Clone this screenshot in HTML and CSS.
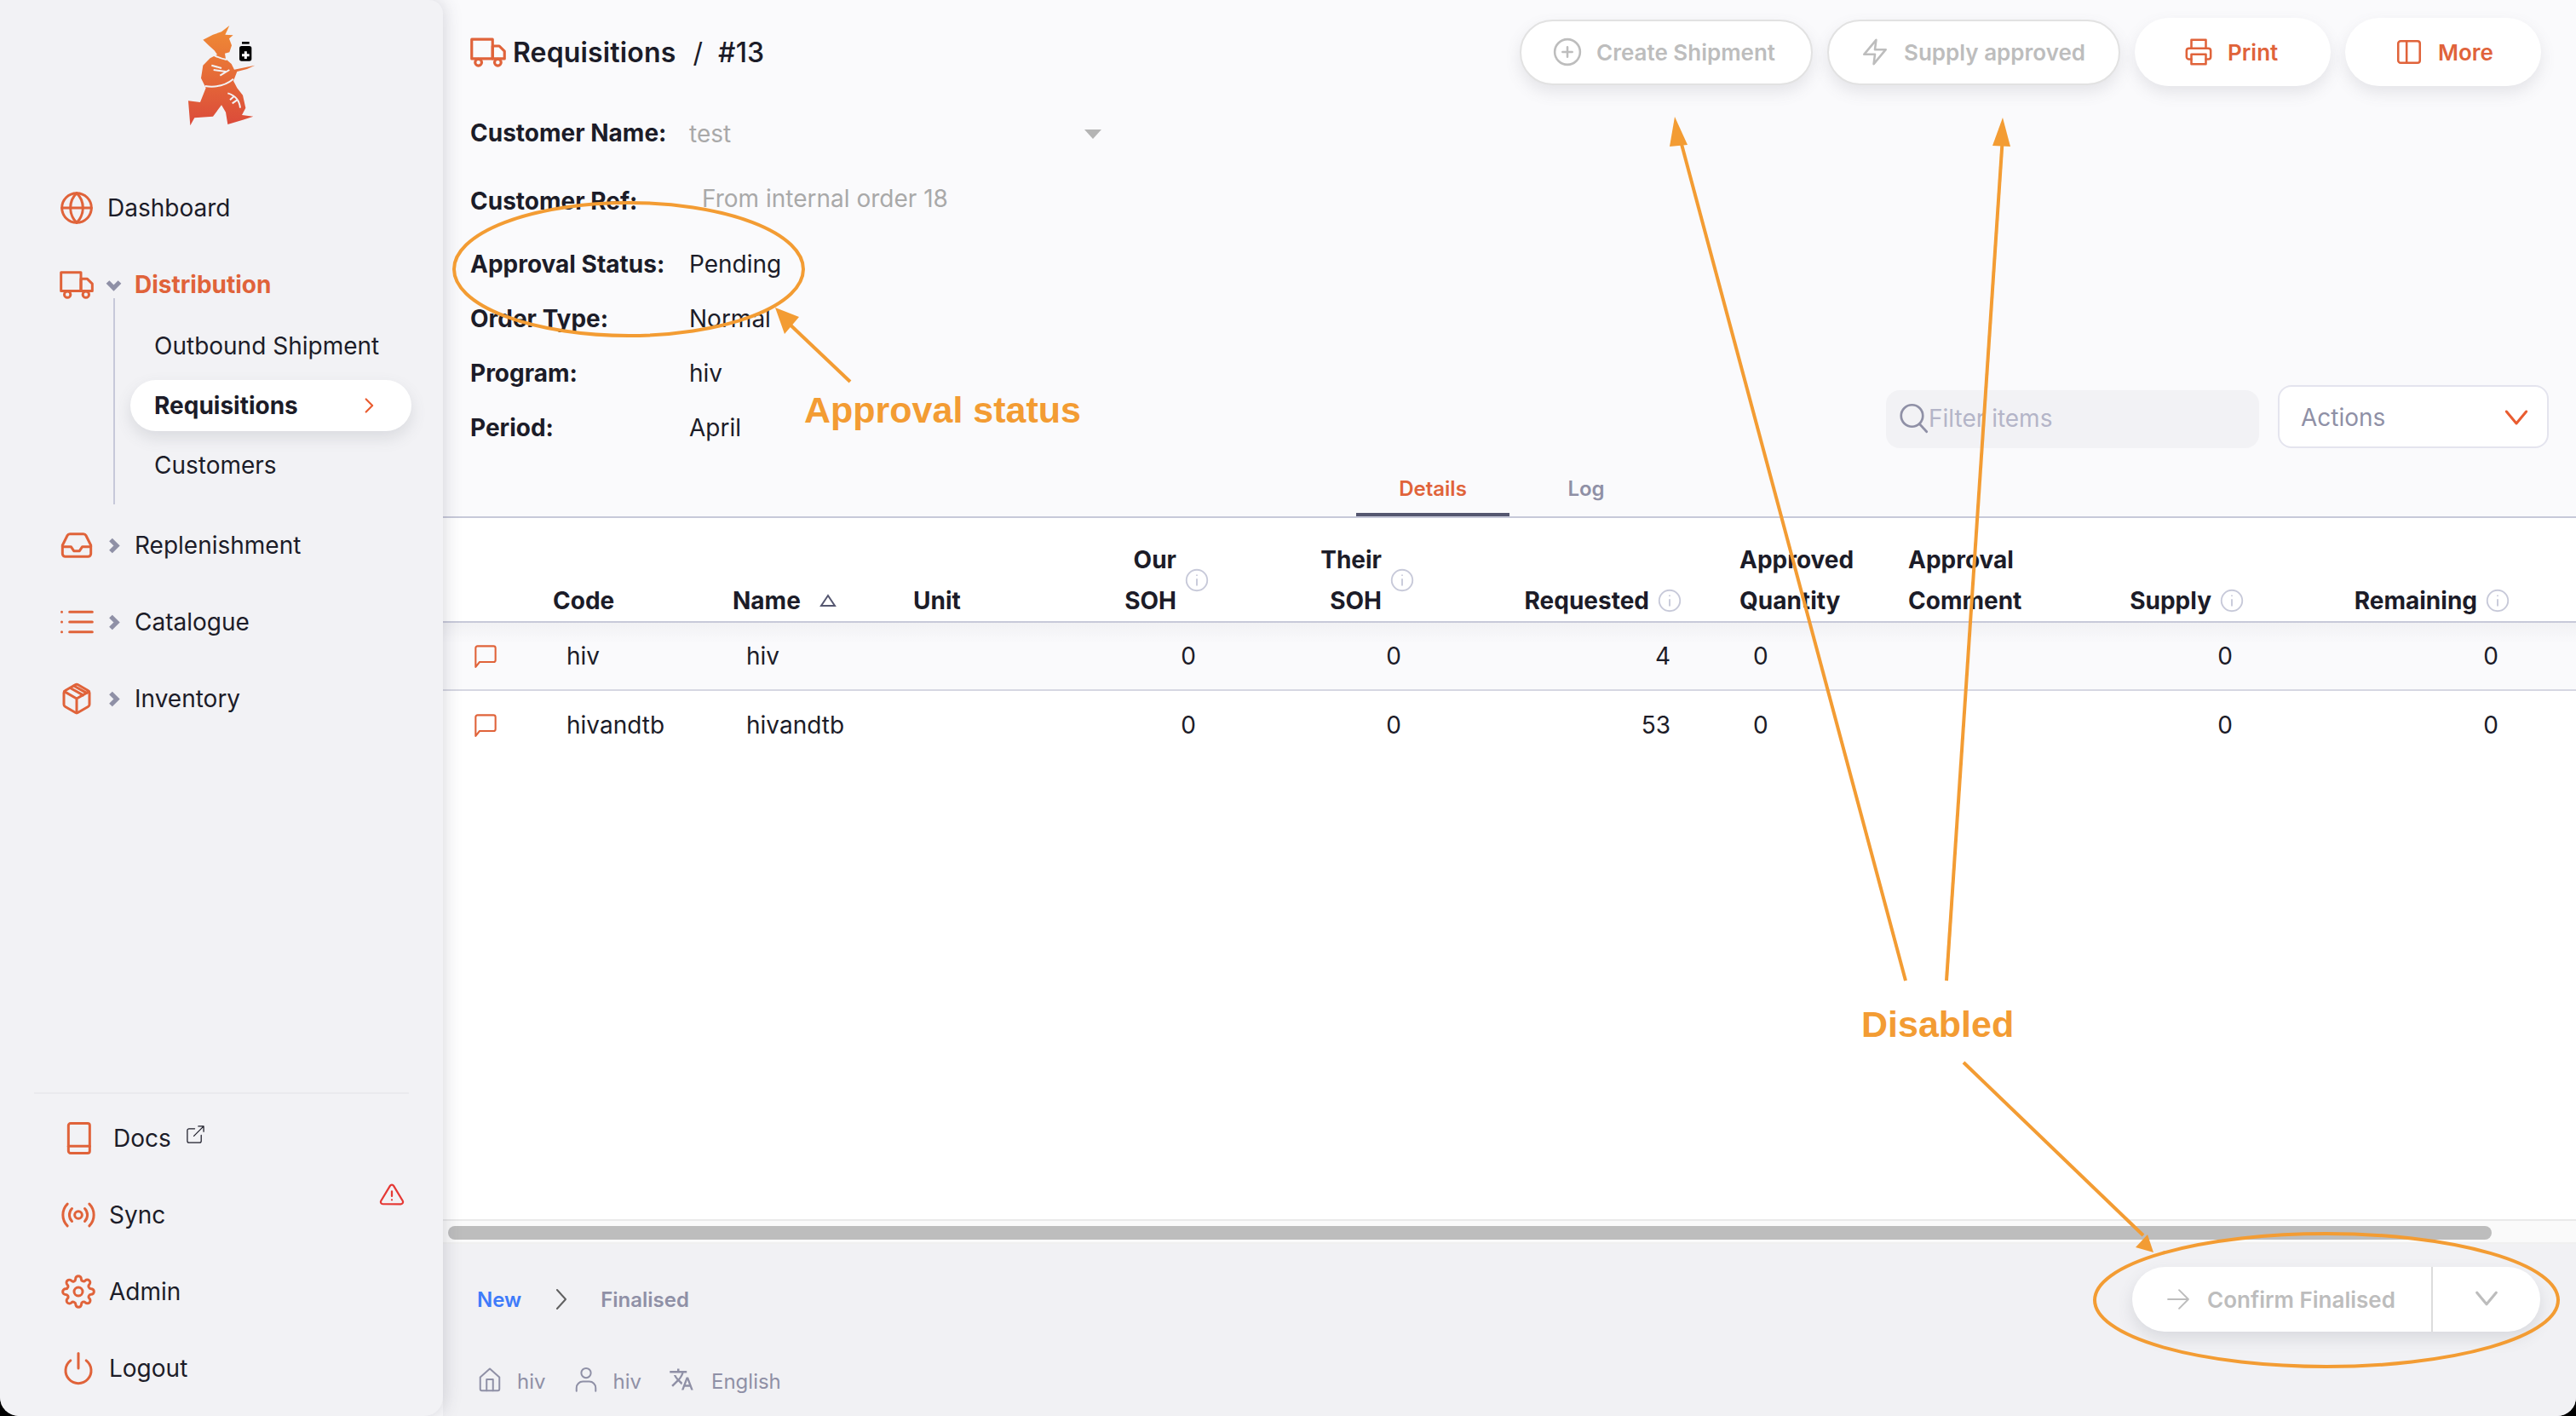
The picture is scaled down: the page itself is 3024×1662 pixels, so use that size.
FILE: index.html
```html
<!DOCTYPE html>
<html lang="en">
<head>
  <meta charset="UTF-8">
  <title>Requisitions #13</title>
  <link rel="stylesheet" href="styles.css">
</head>
<body>
  <div class="app">
    <aside class="sidebar">
      <div class="logo">
        <svg class="logo-img" viewBox="0 0 300 405">
          <defs>
            <linearGradient id="logoFill" x1="0" y1="0" x2="0" y2="1">
              <stop offset="0" stop-color="#f08c35"/>
              <stop offset="1" stop-color="#db4a3a"/>
            </linearGradient>
          </defs>
          <path fill="url(#logoFill)" d="M178 30 L163 62 L191 64 L177 76 L186 100 L178 124 L162 128 L165 148 L185 165 L195 185 L268 170 L240 183 L205 192 L192 225 L205 250 L225 275 L235 320 L222 345 L262 350 L225 362 L172 378 L165 335 L150 310 L120 350 L55 355 L40 382 L33 295 L75 300 L95 250 L78 215 L85 170 L110 145 L135 132 L125 118 L105 100 L85 80 L120 62 L150 52 Z"/>
          <g class="logo-cut">
            <path d="M92 243 Q150 252 192 218"/>
            <path d="M122 134 Q145 146 168 150"/>
            <path d="M115 170 L150 180 M122 186 L165 192 M145 206 L178 186"/>
            <path d="M172 268 Q212 280 216 320 M195 278 L180 292 M205 292 L188 304"/>
          </g>
          <rect x="222" y="87" width="26" height="8"/>
          <rect x="213" y="102" width="43" height="53" rx="8"/>
          <path class="logo-cross" d="M235 121 V147 M222 134 H248"/>
        </svg>
      </div>

      <nav class="nav">
        <a class="nav-item">
          <svg class="ic nav-icon" viewBox="0 0 24 24"><circle cx="12" cy="12" r="10.4"/><path d="M1.600 12h20.800"/><path d="M12 1.600c3 2.900 4.400 6.500 4.400 10.400S15 19.500 12 22.400C9 19.500 7.600 15.900 7.600 12S9 4.500 12 1.600z"/></svg>
          <span class="nav-label">Dashboard</span>
        </a>
        <a class="nav-item nav-item-open">
          <svg class="ic nav-icon" viewBox="0 0 24 24"><path d="M1 3.500h14v13H1z"/><path d="M15 8h4.500L23 11.500v5h-8z"/><circle cx="5.500" cy="19" r="2.200"/><circle cx="18.500" cy="19" r="2.200"/></svg>
          <svg class="ic nav-caret" viewBox="0 0 24 24"><path d="M4 8l8 8 8-8"/></svg>
          <span class="nav-label">Distribution</span>
        </a>
        <div class="subnav">
          <a class="subnav-item">Outbound Shipment</a>
          <a class="subnav-item subnav-active">Requisitions
            <svg class="ic subnav-arrow" viewBox="0 0 24 24"><path d="M8 3l9 9-9 9"/></svg>
          </a>
          <a class="subnav-item">Customers</a>
        </div>
        <a class="nav-item">
          <svg class="ic nav-icon" viewBox="0 0 24 24"><path d="M22 13h-6l-2 3h-4l-2-3H2"/><path d="M5.450 5.110L2 12v6a2 2 0 0 0 2 2h16a2 2 0 0 0 2-2v-6l-3.450-6.890A2 2 0 0 0 16.760 4H7.240a2 2 0 0 0-1.790 1.110z"/></svg>
          <svg class="ic nav-caret" viewBox="0 0 24 24"><path d="M8 4l8 8-8 8"/></svg>
          <span class="nav-label">Replenishment</span>
        </a>
        <a class="nav-item">
          <svg class="ic nav-icon" viewBox="0 0 24 24"><path d="M7 5h16M7 12h16M7 19h16"/><path d="M1.500 5h.01M1.500 12h.01M1.500 19h.01"/></svg>
          <svg class="ic nav-caret" viewBox="0 0 24 24"><path d="M8 4l8 8-8 8"/></svg>
          <span class="nav-label">Catalogue</span>
        </a>
        <a class="nav-item">
          <svg class="ic nav-icon" viewBox="0 0 24 24"><path d="M21 16V8a2 2 0 0 0-1-1.730l-7-4a2 2 0 0 0-2 0l-7 4A2 2 0 0 0 3 8v8a2 2 0 0 0 1 1.730l7 4a2 2 0 0 0 2 0l7-4A2 2 0 0 0 21 16z"/><path d="M3.300 7L12 12l8.700-5M12 22V12"/><path d="M7.500 4.500l9 5M10 3l9 5"/></svg>
          <svg class="ic nav-caret" viewBox="0 0 24 24"><path d="M8 4l8 8-8 8"/></svg>
          <span class="nav-label">Inventory</span>
        </a>
      </nav>

      <div class="nav-bottom">
        <a class="nav-item nav-item-low">
          <svg class="ic nav-icon" viewBox="0 0 24 24"><rect x="5" y="1.500" width="15" height="21" rx="1.500"/><path d="M5 17.500h15"/></svg>
          <span class="nav-label nav-label-docs">Docs</span>
          <svg class="ic ext-icon" viewBox="0 0 24 24"><path d="M11 5H4a2 2 0 0 0-2 2v13a2 2 0 0 0 2 2h13a2 2 0 0 0 2-2v-7"/><path d="M10 14L22 2M15.500 2H22v6.500"/></svg>
        </a>
        <a class="nav-item nav-item-low">
          <svg class="ic nav-icon" viewBox="0 0 24 24"><circle cx="12" cy="12" r="2.600"/><path d="M16.500 7.500a6.400 6.400 0 0 1 0 9M7.500 16.500a6.400 6.400 0 0 1 0-9M19.700 4.300a10.900 10.900 0 0 1 0 15.400M4.300 19.700a10.900 10.900 0 0 1 0-15.400"/></svg>
          <span class="nav-label">Sync</span>
          <svg class="ic warn-icon" viewBox="0 0 24 24"><path d="M10.300 3.900L1.800 18a2 2 0 0 0 1.700 3h17a2 2 0 0 0 1.700-3L13.700 3.900a2 2 0 0 0-3.400 0z"/><path d="M12 9v4.500M12 17h.01"/></svg>
        </a>
        <a class="nav-item nav-item-low">
          <svg class="ic nav-icon" viewBox="0 0 24 24"><circle cx="12" cy="12" r="3"/><path d="M19.400 15a1.650 1.650 0 0 0 .33 1.820l.06.06a2 2 0 1 1-2.830 2.830l-.06-.06a1.650 1.650 0 0 0-2.800 1.170V21a2 2 0 1 1-4 0v-.09A1.650 1.650 0 0 0 9 19.400a1.650 1.650 0 0 0-1.820.33l-.06.06a2 2 0 1 1-2.830-2.830l.06-.06a1.650 1.650 0 0 0-1.170-2.800H3a2 2 0 1 1 0-4h.09A1.650 1.650 0 0 0 4.600 9a1.650 1.650 0 0 0-.33-1.820l-.06-.06a2 2 0 1 1 2.830-2.830l.06.06A1.650 1.650 0 0 0 9 4.680H9a1.650 1.650 0 0 0 1-1.510V3a2 2 0 1 1 4 0v.09a1.650 1.650 0 0 0 2.800 1.170l.06-.06a2 2 0 1 1 2.830 2.830l-.06.06A1.650 1.650 0 0 0 19.400 9v0a1.650 1.650 0 0 0 1.510 1H21a2 2 0 1 1 0 4h-.09a1.650 1.650 0 0 0-1.510 1z"/></svg>
          <span class="nav-label">Admin</span>
        </a>
        <a class="nav-item nav-item-low">
          <svg class="ic nav-icon" viewBox="0 0 24 24"><path d="M12 1.500V12"/><path d="M6.500 6.500a9 9 0 1 0 11 0"/></svg>
          <span class="nav-label">Logout</span>
        </a>
      </div>
    </aside>

    <main class="main">
      <header class="top">
        <div class="title-row">
          <h1 class="title">
            <svg class="ic title-icon" viewBox="0 0 24 24"><path d="M1 3.500h14v13H1z"/><path d="M15 8h4.500L23 11.500v5h-8z"/><circle cx="5.500" cy="19" r="2.200"/><circle cx="18.500" cy="19" r="2.200"/></svg>
            Requisitions<span class="title-sep">/</span><span class="title-num">#13</span>
          </h1>
          <div class="actions">
            <button class="btn btn-disabled">
              <svg class="ic btn-icon" viewBox="0 0 24 24"><circle cx="12" cy="12" r="10.500"/><path d="M12 8v8M8 12h8"/></svg>Create Shipment
            </button>
            <button class="btn btn-disabled">
              <svg class="ic btn-icon" viewBox="0 0 24 24"><path d="M13 2L3 14h9l-1 8 10-12h-9l1-8z"/></svg>Supply approved
            </button>
            <button class="btn btn-wide">
              <svg class="ic btn-icon" viewBox="0 0 24 24"><path d="M6 9V2h12v7"/><path d="M6 18H4a2 2 0 0 1-2-2v-5a2 2 0 0 1 2-2h16a2 2 0 0 1 2 2v5a2 2 0 0 1-2 2h-2"/><path d="M6 14h12v8H6z"/></svg>Print
            </button>
            <button class="btn btn-wide">
              <svg class="ic btn-icon" viewBox="0 0 24 24"><rect x="3" y="3" width="18" height="18" rx="2"/><path d="M10 3v18"/></svg>More
            </button>
          </div>
        </div>

        <div class="info-row">
          <div class="fields">
            <div class="field field-name">
              <span class="field-label">Customer Name:</span>
              <div class="field-select"><span>test</span><span class="select-tri"></span></div>
            </div>
            <div class="field field-ref">
              <span class="field-label">Customer Ref:</span>
              <span class="field-ref-value">From internal order 18</span>
            </div>
            <div class="field">
              <span class="field-label">Approval Status:</span>
              <span class="field-value">Pending</span>
            </div>
            <div class="field">
              <span class="field-label">Order Type:</span>
              <span class="field-value">Normal</span>
            </div>
            <div class="field">
              <span class="field-label">Program:</span>
              <span class="field-value">hiv</span>
            </div>
            <div class="field">
              <span class="field-label">Period:</span>
              <span class="field-value">April</span>
            </div>
          </div>
          <div class="toolbar">
            <div class="search">
              <svg class="ic search-icon" viewBox="0 0 24 24"><circle cx="11" cy="10" r="8.500"/><path d="M17 16.500l5.500 6"/></svg>
              <span>Filter items</span>
            </div>
            <div class="dropdown">
              <span>Actions</span>
              <svg class="ic dropdown-arrow" viewBox="0 0 24 24"><path d="M2 6l10 12L22 6"/></svg>
            </div>
          </div>
        </div>

        <div class="tabs">
          <a class="tab tab-active">Details</a>
          <a class="tab">Log</a>
        </div>
      </header>

      <div class="table-wrap">
        <table class="grid">
          <thead>
            <tr>
              <th class="col-msg"></th>
              <th class="col-code">Code</th>
              <th class="col-name"><span class="sort-head">Name<svg class="sort-icon" viewBox="0 0 20 16"><path d="M10 2L18 14H2z"/></svg></span></th>
              <th class="col-unit">Unit</th>
              <th class="col-soh"><div class="num-head"><span>Our<br>SOH</span><svg class="ic info-icon" viewBox="0 0 24 24"><circle cx="12" cy="12" r="10.500"/><path d="M12 11v6M12 7h.01"/></svg></div></th>
              <th class="col-their"><div class="num-head"><span>Their<br>SOH</span><svg class="ic info-icon" viewBox="0 0 24 24"><circle cx="12" cy="12" r="10.500"/><path d="M12 11v6M12 7h.01"/></svg></div></th>
              <th class="col-req"><div class="num-head num-head-tight"><span>Requested</span><svg class="ic info-icon" viewBox="0 0 24 24"><circle cx="12" cy="12" r="10.500"/><path d="M12 11v6M12 7h.01"/></svg></div></th>
              <th class="col-appr">Approved<br>Quantity</th>
              <th class="col-comment">Approval<br>Comment</th>
              <th class="col-supply"><div class="num-head num-head-tight"><span>Supply</span><svg class="ic info-icon" viewBox="0 0 24 24"><circle cx="12" cy="12" r="10.500"/><path d="M12 11v6M12 7h.01"/></svg></div></th>
              <th class="col-rem"><div class="num-head num-head-tight"><span>Remaining</span><svg class="ic info-icon" viewBox="0 0 24 24"><circle cx="12" cy="12" r="10.500"/><path d="M12 11v6M12 7h.01"/></svg></div></th>
              <th class="col-end"></th>
            </tr>
          </thead>
          <tbody>
            <tr class="row-first">
              <td class="cell-msg"><svg class="ic msg-icon" viewBox="0 0 24 24"><path d="M22 16a2 2 0 0 1-2 2H6l-4 5V4a2 2 0 0 1 2-2h16a2 2 0 0 1 2 2z"/></svg></td>
              <td class="cell-text">hiv</td>
              <td class="cell-text">hiv</td>
              <td></td>
              <td class="cell-num">0</td>
              <td class="cell-num">0</td>
              <td class="cell-num">4</td>
              <td class="cell-appr">0</td>
              <td></td>
              <td class="cell-num">0</td>
              <td class="cell-num">0</td>
              <td></td>
            </tr>
            <tr>
              <td class="cell-msg"><svg class="ic msg-icon" viewBox="0 0 24 24"><path d="M22 16a2 2 0 0 1-2 2H6l-4 5V4a2 2 0 0 1 2-2h16a2 2 0 0 1 2 2z"/></svg></td>
              <td class="cell-text">hivandtb</td>
              <td class="cell-text">hivandtb</td>
              <td></td>
              <td class="cell-num">0</td>
              <td class="cell-num">0</td>
              <td class="cell-num">53</td>
              <td class="cell-appr">0</td>
              <td></td>
              <td class="cell-num">0</td>
              <td class="cell-num">0</td>
              <td></td>
            </tr>
          </tbody>
        </table>
      </div>

      <div class="scroll-track"><div class="scroll-thumb"></div></div>

      <footer class="footer">
        <div class="footer-main">
          <div class="steps">
            <span class="step-on">New</span>
            <svg class="ic step-arrow" viewBox="0 0 16 24"><path d="M3 1l10 11L3 23"/></svg>
            <span class="step-off">Finalised</span>
          </div>
          <div class="split-btn">
            <button class="split-main">
              <svg class="ic split-icon" viewBox="0 0 24 24"><path d="M1 12h22M13 2l10 10-10 10"/></svg>Confirm Finalised
            </button>
            <button class="split-more">
              <svg class="ic split-caret" viewBox="0 0 24 16"><path d="M2 2l10 12L22 2"/></svg>
            </button>
          </div>
        </div>
        <div class="status">
          <svg class="ic status-icon" viewBox="0 0 24 24"><path d="M3 10l9-8 9 8v11a1.500 1.500 0 0 1-1.500 1.500h-15A1.500 1.500 0 0 1 3 21z"/><path d="M9 22.500V12h6v10.500"/></svg>
          <span class="status-text">hiv</span>
          <svg class="ic status-icon status-gap" viewBox="0 0 24 24"><circle cx="12" cy="6" r="4.500"/><path d="M3 23v-3a6 6 0 0 1 6-6h6a6 6 0 0 1 6 6v3"/></svg>
          <span class="status-text">hiv</span>
          <svg class="status-icon status-gap status-solid" viewBox="0 0 24 24"><path d="M12.870 15.070l-2.540-2.510.03-.03c1.740-1.940 2.980-4.170 3.710-6.530H17V4h-7V2H8v2H1v1.990h11.170C11.500 7.920 10.440 9.750 9 11.350 8.070 10.320 7.300 9.190 6.690 8h-2c.73 1.630 1.730 3.170 2.980 4.560l-5.090 5.020L4 19l5-5 3.110 3.110.76-2.040zM18.500 10h-2L12 22h2l1.120-3h4.750L21 22h2l-4.500-12zm-2.620 7l1.620-4.330L19.120 17h-3.240z"/></svg>
          <span class="status-text status-lang">English</span>
        </div>
      </footer>
    </main>

    <!-- hand drawn notes on top of the screenshot -->
    <svg class="notes" viewBox="0 0 3024 1662">
      <ellipse cx="738" cy="316" rx="205" ry="78"/>
      <ellipse cx="2731" cy="1526" rx="272" ry="78"/>
      <path d="M998 448L919 373"/>
      <path class="note-head" d="M910 361L938 372L921 392Z"/>
      <path d="M2237 1151L1971 158"/>
      <path class="note-head" d="M1966 137L1981 170L1960 172Z"/>
      <path d="M2285 1151L2351 160"/>
      <path class="note-head" d="M2351 138L2360 172L2339 171Z"/>
      <path d="M2305 1247L2516 1450"/>
      <path class="note-head" d="M2528 1470L2507 1464L2521 1449Z"/>
    </svg>
    <div class="note note-status">Approval status</div>
    <div class="note note-disabled">Disabled</div>
  </div>
</body>
</html>
```

FILE: styles.css
```css
* {
  box-sizing: border-box;
}
html, body {
  margin: 0;
  height: 100%;
  background-color: #000;
}
body {
  font-family: 'Inter', 'Liberation Sans', sans-serif;
  font-size: 28px;
  color: #1c1c28;
}
.app {
  position: relative;
  display: flex;
  height: 1662px;
  overflow: hidden;
  background-color: #fafafc;
  border-radius: 0 0 22px 22px;
}

/* icons */
.ic {
  fill: none;
  stroke: currentColor;
  stroke-width: 1.8;
  stroke-linecap: round;
  stroke-linejoin: round;
  flex: none;
}

/* sidebar */
.sidebar {
  position: relative;
  z-index: 2;
  flex: none;
  display: flex;
  flex-direction: column;
  width: 520px;
  height: 100%;
  background-color: #f2f2f5;
  border-radius: 0 16px 22px 22px;
  box-shadow: 0 0 22px rgba(60, 60, 80, 0.22);
}
.logo {
  display: flex;
  justify-content: center;
  height: 214px;
  padding-top: 20px;
}
.logo-img {
  width: 100px;
  height: 135px;
}
.logo-cut path {
  fill: none;
  stroke: #f2f2f5;
  stroke-width: 6;
}
.logo-cross {
  fill: none;
  stroke: #fff;
  stroke-width: 9;
}
.nav {
  display: flex;
  flex-direction: column;
}
.nav-item {
  position: relative;
  display: flex;
  align-items: center;
  height: 60px;
  margin-bottom: 30px;
  padding-left: 70px;
}
.nav-icon {
  width: 40px;
  height: 40px;
  color: #e0633a;
}
.nav-caret {
  width: 21px;
  height: 21px;
  margin-left: 13px;
  color: #8f90a6;
  stroke-width: 6;
  stroke-linecap: butt;
  stroke-linejoin: miter;
}
.nav-label {
  margin-left: 16px;
}
.nav-caret + .nav-label {
  margin-left: 14px;
}
.nav-item-open .nav-label {
  font-weight: 700;
  color: #e0633a;
}
.subnav {
  display: flex;
  flex-direction: column;
  gap: 10px;
  width: 360px;
  margin: -44px 0 18px 133px;
  padding: 26px 0 16px 18px;
  border-left: 2px solid #c7c9d9;
}
.subnav-item {
  display: flex;
  align-items: center;
  justify-content: space-between;
  width: 330px;
  height: 60px;
  padding: 0 40px 0 28px;
  white-space: nowrap;
  border-radius: 30px;
}
.subnav-active {
  font-weight: 700;
  background-color: #fff;
  box-shadow: 0 8px 18px rgba(96, 97, 112, 0.16);
}
.subnav-arrow {
  width: 20px;
  height: 20px;
  color: #e95c30;
  stroke-width: 2.6;
}
.nav-bottom {
  margin: auto 40px 0;
  padding-top: 22px;
  border-top: 2px solid #eaeaee;
}
.nav-item-low {
  left: -40px;
  width: 520px;
  padding-left: 72px;
}
.nav-item-low:last-child {
  margin-bottom: 26px;
}
.nav-item-low .nav-label {
  margin-left: 16px;
}
.nav-item-low .nav-label-docs {
  margin-left: 21px;
}
.ext-icon {
  width: 23px;
  height: 23px;
  margin: -10px 0 0 17px;
  stroke-width: 1.3;
}
.warn-icon {
  position: absolute;
  top: -9px;
  left: 444px;
  width: 32px;
  height: 30px;
  color: #e53935;
  stroke-width: 1.8;
}

/* main column */
.main {
  flex: 1;
  display: flex;
  flex-direction: column;
  min-width: 0;
}
.top {
  background-color: #fafafc;
}
.title-row {
  display: flex;
  justify-content: space-between;
  align-items: center;
  padding: 21px 41px 0 32px;
}
.title {
  display: flex;
  align-items: center;
  margin: 0;
  font-size: 32px;
  font-weight: 600;
  letter-spacing: 0.15px;
}
.title-icon {
  width: 42px;
  height: 42px;
  margin-right: 8px;
  color: #e0633a;
}
.title-sep {
  margin: 0 18px 0 20px;
  font-weight: 400;
}
.title-num {
  font-weight: 500;
}
.actions {
  display: flex;
  align-items: center;
  gap: 17px;
}
.btn {
  display: flex;
  align-items: center;
  gap: 17px;
  height: 80px;
  padding: 0 0 0 58px;
  font: 600 26px 'Inter', 'Liberation Sans', sans-serif;
  color: #e0633a;
  background-color: #fff;
  border: 0;
  border-radius: 40px;
  box-shadow: 0 8px 18px rgba(96, 97, 112, 0.14);
}
.btn-wide {
  width: 230px;
}
.btn-disabled {
  width: 344px;
  height: 77px;
  padding: 0 0 0 37px;
  color: #bdbdbd;
  border: 2px solid #e2e2e2;
}
.btn-icon {
  width: 34px;
  height: 34px;
}

/* fields */
.info-row {
  display: flex;
  justify-content: space-between;
  align-items: flex-end;
  padding: 23px 32px 0 32px;
}
.field {
  display: flex;
  align-items: center;
  height: 64px;
}
.field-name {
  margin-bottom: 16px;
}
.field-ref {
  margin-bottom: 10px;
}
.field-label {
  width: 257px;
  font-weight: 700;
}
.field-select {
  display: flex;
  justify-content: space-between;
  align-items: center;
  width: 484px;
  padding-top: 2px;
  color: #a9a9a9;
}
.select-tri {
  width: 0;
  height: 0;
  border-top: 11px solid #b4b4b4;
  border-left: 10px solid transparent;
  border-right: 10px solid transparent;
}
.field-ref-value {
  margin-left: 15px;
  padding-bottom: 6px;
  color: #a9a9a9;
}
.toolbar {
  display: flex;
  align-items: flex-end;
  gap: 22px;
  padding-bottom: 8px;
}
.search {
  display: flex;
  align-items: center;
  width: 438px;
  height: 68px;
  padding: 0 0 3px 14px;
  color: #b4b5c8;
  background-color: #f2f2f5;
  border-radius: 16px;
}
.search-icon {
  width: 36px;
  height: 36px;
  color: #8f90a6;
}
.dropdown {
  display: flex;
  justify-content: space-between;
  align-items: center;
  width: 318px;
  height: 74px;
  padding: 2px 22px 0 25px;
  color: #8f90a6;
  background-color: #fff;
  border: 2px solid #e4e4ee;
  border-radius: 16px;
}
.dropdown-arrow {
  width: 28px;
  height: 28px;
  color: #e95c30;
  stroke-width: 2.6;
}

/* tabs */
.tabs {
  display: flex;
  justify-content: center;
  margin-top: 6px;
  border-bottom: 2px solid #c7c9d9;
}
.tab {
  display: flex;
  justify-content: center;
  align-items: center;
  width: 180px;
  height: 66px;
  font-size: 24px;
  font-weight: 600;
  color: #8f90a6;
}
.tab-active {
  padding-top: 4px;
  color: #e0633a;
  border-bottom: 4px solid #555770;
}

/* table */
.table-wrap {
  flex: 1;
  min-height: 0;
  background-color: #fff;
}
.grid {
  width: 100%;
  table-layout: fixed;
  border-collapse: collapse;
}
.grid th {
  height: 120px;
  padding: 25px 0 0 12px;
  font-weight: 700;
  line-height: 48px;
  text-align: left;
  vertical-align: bottom;
  border-bottom: 2px solid #c7c9d9;
}
.col-msg { width: 117px; }
.col-code { width: 211px; }
.col-name { width: 212px; }
.col-unit { width: 150px; }
.col-soh { width: 221px; }
.col-their { width: 241px; }
.col-req { width: 316px; }
.col-appr { width: 240px; }
.col-comment { width: 232px; }
.col-supply { width: 188px; }
.col-rem { width: 312px; }
.grid th.col-appr {
  padding-left: 54px;
}
.num-head {
  display: flex;
  justify-content: flex-end;
  align-items: center;
  gap: 10px;
  padding-right: 12px;
  text-align: right;
}
.num-head-tight {
  padding-right: 14px;
}
.sort-head {
  display: inline-flex;
  align-items: center;
  gap: 22px;
}
.sort-icon {
  width: 20px;
  height: 16px;
  fill: none;
  stroke: #555770;
  stroke-width: 2;
}
.info-icon {
  width: 28px;
  height: 28px;
  color: #c7c9d9;
  stroke-width: 1.6;
}
.grid td {
  height: 80px;
  padding: 0;
}
.row-first td {
  background-image: linear-gradient(#f1f1f4, #fafafc 24px);
  background-color: #fafafc;
  border-bottom: 2px solid #d6d7e2;
}
.cell-msg {
  padding-left: 36px !important;
}
.msg-icon {
  display: block;
  width: 28px;
  height: 28px;
  color: #e0633a;
}
.cell-text {
  padding-left: 28px !important;
}
.cell-num {
  padding-right: 27px !important;
  text-align: right;
}
.cell-appr {
  padding-left: 70px !important;
}

/* scrollbar */
.scroll-track {
  height: 29px;
  padding: 6px 6px 0;
  background-color: #fafafa;
  border-top: 2px solid #eaeaea;
  border-bottom: 2px solid #f0f0f0;
}
.scroll-thumb {
  width: 2399px;
  height: 16px;
  background-color: #bdbdbd;
  border-radius: 8px;
}

/* footer */
.footer {
  height: 202px;
  padding: 27px 42px 0 40px;
  background-color: #f1f1f4;
}
.footer-main {
  display: flex;
  justify-content: space-between;
  align-items: center;
}
.steps {
  display: flex;
  align-items: center;
  font-size: 24px;
  font-weight: 600;
}
.step-on {
  color: #3e7bfa;
}
.step-off {
  color: #8f90a6;
}
.step-arrow {
  width: 16px;
  height: 24px;
  margin: 0 38px 0 39px;
  color: #606060;
  stroke-width: 2;
}
.split-btn {
  display: flex;
  height: 76px;
  background-color: #fff;
  border-radius: 38px;
  box-shadow: 0 8px 18px rgba(96, 97, 112, 0.16);
}
.split-main {
  display: flex;
  align-items: center;
  gap: 21px;
  width: 353px;
  padding: 0 0 0 41px;
  font: 600 26px 'Inter', 'Liberation Sans', sans-serif;
  color: #bdbdbd;
  background: none;
  border: 0;
  border-right: 2px solid #dcdcdc;
}
.split-icon {
  width: 26px;
  height: 26px;
}
.split-more {
  width: 126px;
  padding: 0;
  color: #bdbdbd;
  background: none;
  border: 0;
}
.split-caret {
  width: 28px;
  height: 18px;
  stroke-width: 2.8;
}
.status {
  display: flex;
  align-items: center;
  margin-top: 44px;
  font-size: 24px;
  color: #8f90a6;
}
.status-icon {
  width: 30px;
  height: 30px;
  margin-top: -6px;
  stroke-width: 1.6;
}
.status-solid {
  fill: #8f90a6;
  flex: none;
}
.status-gap {
  margin-left: 32px;
}
.status-text {
  margin-left: 17px;
}
.status-lang {
  margin-left: 20px;
}

/* annotations */
.notes {
  position: absolute;
  z-index: 3;
  top: 0;
  left: 0;
  width: 3024px;
  height: 1662px;
  pointer-events: none;
  fill: none;
  stroke: #f39c33;
  stroke-width: 4;
}
.note-head {
  fill: #f39c33;
  stroke: none;
}
.note {
  position: absolute;
  z-index: 3;
  font-family: 'Liberation Sans', Arial, sans-serif;
  font-size: 43px;
  font-weight: 700;
  line-height: 50px;
  color: #f39c33;
}
.note-status {
  top: 456px;
  left: 944px;
}
.note-disabled {
  top: 1177px;
  left: 2185px;
}
```
